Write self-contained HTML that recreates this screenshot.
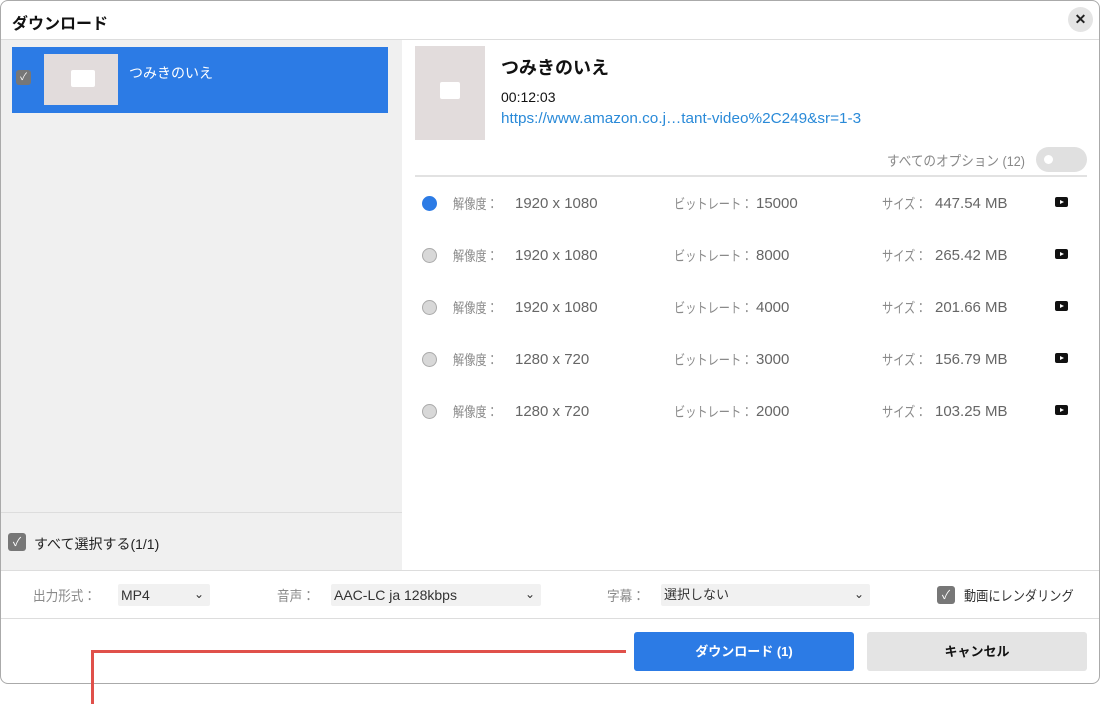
<!DOCTYPE html>
<html><head><meta charset="utf-8"><style>
*{margin:0;padding:0;box-sizing:border-box}
body{width:1100px;height:704px;background:#fff;position:relative;overflow:hidden;font-family:"Liberation Sans","Noto Sans CJK JP",sans-serif;color:#222}
.a{position:absolute;white-space:nowrap}
.g{color:#8a8a8a;font-size:14px;line-height:18px;transform-origin:left center;transform:scaleX(.8)}
.v{color:#666;font-size:15px;line-height:18px}
.radio{position:absolute;width:15px;height:15px;border-radius:50%;background:#d8d8d8;border:1px solid #aaa}
.yt{position:absolute;width:13px;height:10px;background:#111;border-radius:2px}
.yt:after{content:"";position:absolute;left:5px;top:3px;border-left:4px solid #fff;border-top:2px solid transparent;border-bottom:2px solid transparent}
.sel{position:absolute;height:22px;background:#f1f1f1;border-radius:2px;font-size:14px;color:#333;padding:3px 3px;line-height:16px}
.sel span{position:absolute;right:6px;top:2px;font-size:12px}
.cb{position:absolute;width:18px;height:18px;background:#777;border-radius:3px;color:#fff;font-size:12px;text-align:center;line-height:18px}
</style></head><body>
<div class="a" style="left:0;top:0;width:1100px;height:684px;border:1px solid #aaa;border-radius:8px;background:#fff"></div>
<div class="a" style="left:12px;top:10px;font-size:16px;font-weight:bold;color:#111">ダウンロード</div>
<div class="a" style="left:1068px;top:7px;width:25px;height:25px;border-radius:50%;background:#e4e4e4;text-align:center;line-height:25px;font-weight:bold;font-size:14px">✕</div>
<div class="a" style="left:1px;top:39px;width:1098px;height:1px;background:#ddd"></div>
<div class="a" style="left:1px;top:40px;width:401px;height:530px;background:#f0f0f0"></div>
<div class="a" style="left:12px;top:47px;width:376px;height:66px;background:#2c7be5"></div>
<div class="cb" style="left:16px;top:70px;width:15px;height:15px;line-height:15px;font-size:10px;background:#777">✓</div>
<div class="a" style="left:44px;top:54px;width:74px;height:51px;background:#e2dcdc"></div>
<div class="a" style="left:71px;top:70px;width:24px;height:17px;background:#fff;border-radius:2px"></div>
<div class="a" style="left:129px;top:63px;color:#fff;font-size:14px">つみきのいえ</div>
<div class="a" style="left:1px;top:512px;width:401px;height:1px;background:#ddd"></div>
<div class="cb" style="left:8px;top:533px;">✓</div>
<div class="a" style="left:34px;top:534px;font-size:14px;color:#222">すべて選択する(1/1)</div>

<div class="a" style="left:415px;top:46px;width:70px;height:94px;background:#e2dcdc"></div>
<div class="a" style="left:440px;top:82px;width:20px;height:17px;background:#fff;border-radius:2px"></div>
<div class="a" style="left:501px;top:54px;font-size:18px;font-weight:bold;color:#111">つみきのいえ</div>
<div class="a" style="left:501px;top:89px;font-size:14px;color:#111">00:12:03</div>
<div class="a" style="left:501px;top:110px;font-size:15px;color:#2a8ad8;transform-origin:left;transform:scaleX(1.02)">https://www.amazon.co.j…tant-video%2C249&amp;sr=1-3</div>
<div class="a" style="left:887px;top:151px;font-size:14px;color:#888;transform-origin:left;transform:scaleX(.9)">すべてのオプション (12)</div>
<div class="a" style="left:1036px;top:147px;width:51px;height:25px;border-radius:13px;background:#e0e0e0"></div>
<div class="a" style="left:1044px;top:155px;width:9px;height:9px;border-radius:50%;background:#fff"></div>
<div class="a" style="left:415px;top:175px;width:672px;height:2px;background:#e2e2e2"></div>

<div class="radio" style="left:422px;top:196px;background:#2c7be5;border-color:#2c7be5"></div>
<div class="a g" style="left:453px;top:195px">解像度：</div><div class="a v" style="left:515px;top:195px">1920 x 1080</div>
<div class="a g" style="left:674px;top:195px">ビットレート：</div><div class="a v" style="left:756px;top:195px">15000</div>
<div class="a g" style="left:882px;top:195px">サイズ：</div><div class="a v" style="left:935px;top:195px">447.54 MB</div>
<div class="yt" style="left:1055px;top:197px"></div>

<div class="radio" style="left:422px;top:248px"></div>
<div class="a g" style="left:453px;top:247px">解像度：</div><div class="a v" style="left:515px;top:247px">1920 x 1080</div>
<div class="a g" style="left:674px;top:247px">ビットレート：</div><div class="a v" style="left:756px;top:247px">8000</div>
<div class="a g" style="left:882px;top:247px">サイズ：</div><div class="a v" style="left:935px;top:247px">265.42 MB</div>
<div class="yt" style="left:1055px;top:249px"></div>

<div class="radio" style="left:422px;top:300px"></div>
<div class="a g" style="left:453px;top:299px">解像度：</div><div class="a v" style="left:515px;top:299px">1920 x 1080</div>
<div class="a g" style="left:674px;top:299px">ビットレート：</div><div class="a v" style="left:756px;top:299px">4000</div>
<div class="a g" style="left:882px;top:299px">サイズ：</div><div class="a v" style="left:935px;top:299px">201.66 MB</div>
<div class="yt" style="left:1055px;top:301px"></div>

<div class="radio" style="left:422px;top:352px"></div>
<div class="a g" style="left:453px;top:351px">解像度：</div><div class="a v" style="left:515px;top:351px">1280 x 720</div>
<div class="a g" style="left:674px;top:351px">ビットレート：</div><div class="a v" style="left:756px;top:351px">3000</div>
<div class="a g" style="left:882px;top:351px">サイズ：</div><div class="a v" style="left:935px;top:351px">156.79 MB</div>
<div class="yt" style="left:1055px;top:353px"></div>

<div class="radio" style="left:422px;top:404px"></div>
<div class="a g" style="left:453px;top:403px">解像度：</div><div class="a v" style="left:515px;top:403px">1280 x 720</div>
<div class="a g" style="left:674px;top:403px">ビットレート：</div><div class="a v" style="left:756px;top:403px">2000</div>
<div class="a g" style="left:882px;top:403px">サイズ：</div><div class="a v" style="left:935px;top:403px">103.25 MB</div>
<div class="yt" style="left:1055px;top:405px"></div>

<div class="a" style="left:1px;top:570px;width:1098px;height:1px;background:#ddd"></div>
<div class="a g" style="left:33px;top:587px;transform:scaleX(.9)">出力形式：</div>
<div class="sel" style="left:118px;top:584px;width:92px">MP4<span>⌄</span></div>
<div class="a g" style="left:277px;top:587px;transform:scaleX(.9)">音声：</div>
<div class="sel" style="left:331px;top:584px;width:210px">AAC-LC ja 128kbps<span>⌄</span></div>
<div class="a g" style="left:607px;top:587px;transform:scaleX(.9)">字幕：</div>
<div class="sel" style="left:661px;top:584px;width:209px;font-size:13px">選択しない<span>⌄</span></div>
<div class="cb" style="left:937px;top:586px">✓</div>
<div class="a" style="left:964px;top:586px;font-size:14px;color:#333;transform-origin:left;transform:scaleX(.87)">動画にレンダリング</div>
<div class="a" style="left:1px;top:618px;width:1098px;height:1px;background:#ddd"></div>

<div class="a" style="left:634px;top:632px;width:220px;height:39px;background:#2c7be5;border-radius:3px;color:#fff;font-weight:bold;font-size:13px;text-align:center;line-height:39px">ダウンロード (1)</div>
<div class="a" style="left:867px;top:632px;width:220px;height:39px;background:#e4e4e4;border-radius:3px;color:#111;font-weight:bold;font-size:13px;text-align:center;line-height:39px">キャンセル</div>

<div class="a" style="left:91px;top:650px;width:535px;height:3px;background:#e0504a"></div>
<div class="a" style="left:91px;top:650px;width:3px;height:54px;background:#e0504a"></div>
</body></html>
